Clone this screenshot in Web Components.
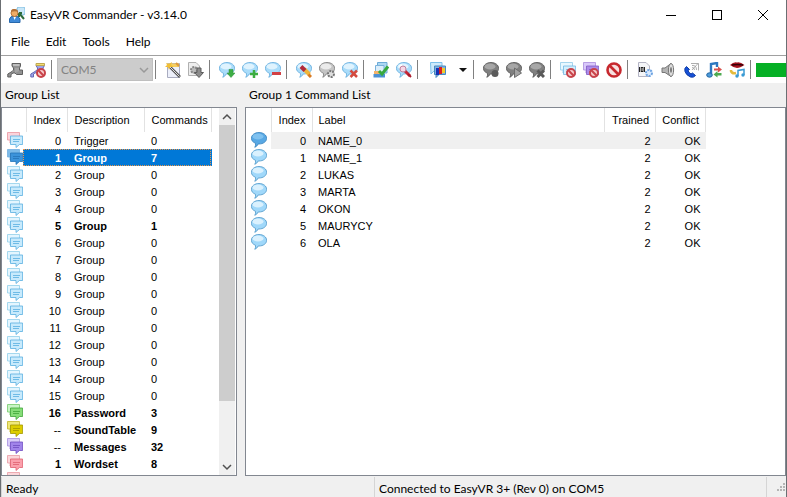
<!DOCTYPE html>
<html lang="en">
<head>
<meta charset="utf-8">
<title>EasyVR Commander</title>
<style>
html,body{margin:0;height:100%}
body{font:12px/16px Lato,"Open Sans",sans-serif;color:#000;background:#f0f0f0;overflow:hidden}
</style>
</head>
<body>
<app-window></app-window>
<script>
const bubble=(a,b,s)=>`<path d="M8 .5C12.300.5 15.600 3 15.600 6.300S12.300 12 8 12L7.200 12Q6 14.500 3.800 15.300Q4.900 13.300 4.500 11.300C2 10.300.4 8.600.4 6.300.4 3 3.700.5 8 .5Z" fill="${b}" stroke="${s}" stroke-width=".8"/><ellipse cx="7" cy="4.500" rx="5.500" ry="3" fill="${a}" opacity=".75"/>`;
const blue=bubble('#f2fbff','#a9dcfa','#5fa9dc');
const grey=bubble('#f8f8f8','#c4c4c4','#777');
const dark=bubble('#b4b4b4','#808080','#505050');
const chat=(back,backS,front,frontS)=>`<path d="M.5.5H12.500V8H5L3 11V8H.5Z" fill="${back}" stroke="${backS}" stroke-width=".8"/><path d="M3.500 4H15.600V12.500H12.500L9 15.500V12.500H3.500Z" fill="${front}" stroke="${frontS}" stroke-width=".8"/><path d="M6 7.500H13M6 9.500H12" stroke="${frontS}" stroke-width=".8" fill="none"/>`;
const ban='<circle cx="11" cy="11" r="4" fill="#f6cccc" stroke="#c9434a" stroke-width="2"/><path d="M8.300 8.300L13.700 13.700" stroke="#c9434a" stroke-width="2"/>';
const ICONS={
 app:'<rect x="8" y="0" width="8" height="8" rx="2" fill="#c9e7f8" stroke="#7dbce0"/><path d="M10 6L15 12M10 6V10M10 6H13" stroke="#2d6b3c" stroke-width="2" fill="none"/><path d="M.5 15.500V12Q1 9 5.500 9T11 12V15.500Z" fill="#3f8ad8" stroke="#2868ac"/><circle cx="5.500" cy="6" r="3.500" fill="#f0ac66" stroke="#b9763b"/><path d="M2 5Q2 1.500 5.500 2T9 5Q6 3.500 2 5Z" fill="#b07038"/><path d="M4.500 10L5.500 13 7 10Z" fill="#fff"/>',
 plug:'<path d="M5 1.500H13.500V4L12.500 6V8H15.500V12.500H9.500L8 11H6L4 12.500V15H.8V12L5 9.500 6.500 8V6L5 4Z" fill="#929292" stroke="#606060"/><path d="M6 3H12.500" stroke="#ccc" stroke-width="1.500"/><path d="M8 6V11L12 9V6Z" fill="#a4a4a4"/>',
 unplug:'<path d="M6 3.500H14.500L13 6V10H9L5 11 3.500 12V15H.8V12L5 9.500 7.500 7.500V6Z" fill="#9da5ea" stroke="#6468b5"/><path d="M6 1.500H14.500V3.500H6Z" fill="#f2dc74" stroke="#c0a850"/>'+ban,
 wizard:'<path d="M2.500 1.500H14.500V15.500H2.500Z" fill="#edf0fb" stroke="#a9acc0"/><path d="M3 1.500H14V5H3Z" fill="#f5cf62"/><path d="M3 3L15 15" stroke="#555" stroke-width="2.600"/><path d="M3 3L14.500 14.500" stroke="#ddd"/><path d="M1 1L4 2 7 0 6 3 9 5 5 5 4 8 3 5 0 5 2 3Z" fill="#f2bf36"/><path d="M11 1L14 4" stroke="#df9a3c" stroke-width="2"/>',
 download:'<path d="M.5.500H8L11.500 4V13.500H.5Z" fill="#eee" stroke="#b0b0b0"/><circle cx="6" cy="8" r="3" fill="#bbb" stroke="#888" stroke-width="2" stroke-dasharray="2 1"/><path d="M9 6H13V10.500H15.500L11 15.500 6.500 10.500H9Z" fill="#8c8c8c" stroke="#5c5c5c"/>',
 down:blue+'<path d="M10 7.500H14V11H16L12 15.500 8 11H10Z" fill="#3dae45" stroke="#2c8c38" stroke-width=".5"/>',
 add:blue+'<path d="M12 8V16M8 12H16" stroke="#3cad40" stroke-width="2.500"/>',
 remove:blue+'<path d="M7 11.500H16" stroke="#d24045" stroke-width="3"/>',
 edit:blue+'<path d="M8 7L13.500 12.500" stroke="#efb53b" stroke-width="4"/><path d="M5 4.500L9 8.500" stroke="#b02a3c" stroke-width="4"/><path d="M12.500 12.500L15 15" stroke="#d97b22" stroke-width="3"/>',
 config:grey+'<circle cx="12" cy="12" r="3" fill="#ddd" stroke="#777" stroke-width="2" stroke-dasharray="2 1"/>',
 erase:blue+'<path d="M8.500 8.500L15 15M15 8.500L8.500 15" stroke="#d34a3f" stroke-width="2.500"/>',
 train:'<path d="M4.500.5H14V11H4.500Z" fill="#acd7f3" stroke="#6caad7"/><path d="M2.500 3.500H11V14H2.500Z" fill="#dceefa" stroke="#7ab3dc"/><path d="M1 9H8L6 14H1Z" fill="#f4b36a"/><path d="M.5 12H12V15.500H.5Z" fill="#4b91d4"/><path d="M6 9L9 12 15 4.500" fill="none" stroke="#37a93e" stroke-width="3"/>',
 test:blue+'<path d="M8 8L14 14" stroke="#c52636" stroke-width="3"/><path d="M4 3L8 8" stroke="#fff" stroke-width="3"/><circle cx="7" cy="7" r="3" fill="#f5d7e6" stroke="#c0809c"/><path d="M12 12L15 15" stroke="#a81b2b" stroke-width="2"/>',
 table:'<path d="M.5.500H12V9H4L1 12Z" fill="#cdeafb" stroke="#7cc0ea"/><path d="M4.500 4H15.500V12.500H9L6 15.500V12.500H4.500Z" fill="#7db2e2" stroke="#4a88bd"/><path d="M6 6H9V13H6Z" fill="#1734b6"/><path d="M9 5H12V12H9Z" fill="#d61f26"/><path d="M12 6H15V11H12Z" fill="#f3cb2b"/>',
 record:dark+'<circle cx="12" cy="11.500" r="3.500" fill="#5b5b5b"/>',
 play:dark+'<path d="M8.500 6L15.500 11 8.500 15.500Z" fill="#a4a4a4" stroke="#6c6c6c"/>',
 stop:dark+'<path d="M8.500 8.500L15 15M15 8.500L8.500 15" stroke="#5a5a5a" stroke-width="3"/>',
 chatban:chat('#e9f8ff','#92cbe9','#d4effc','#72b7e3')+ban,
 purpleban:chat('#d9c9fa','#aa8bdc','#ad8be8','#7f5bc4')+ban,
 ban:'<circle cx="8" cy="8" r="6.500" fill="#f8e0e0" stroke="#c7282e" stroke-width="2.600"/><path d="M3.500 3.500L12.500 12.500" stroke="#c7282e" stroke-width="2.600"/>',
 binary:'<path d="M1.500.500H9L12.500 4V14.500H1.500Z" fill="#f4f5f8" stroke="#b4b4c4"/><path d="M2.500 5V10M7.500 5V10" stroke="#222" fill="none"/><rect x="4.200" y="5.500" width="1.800" height="4" fill="none" stroke="#222"/><circle cx="12" cy="11" r="3" fill="#d8eaff" stroke="#6fa4e2" stroke-width="2" stroke-dasharray="2 1"/>',
 speaker:'<path d="M2 6H5L11 1.500V14.500L5 10.500H2Z" fill="#b4b4b4" stroke="#777"/><ellipse cx="11" cy="8" rx="2.600" ry="6.500" fill="#ddd" stroke="#777"/><ellipse cx="11" cy="8" rx="1" ry="3" fill="#777"/>',
 phone:'<path d="M3.500 4.500Q1 6 2 9.500T7.500 15Q10.500 16 12.500 13.500L9.500 11 8 12Q5.500 10.500 5 8.500L6.500 7.500Z" fill="#1650d8" stroke="#103da4"/><path d="M8 1.500H15.500V8.500M9 3.500Q13.500 3 13.500 8M9 5.500Q11.500 5.500 11.500 8M9 8L15 1.500" fill="none" stroke="#999" stroke-width=".8"/>',
 music:'<path d="M5 12V2L11 1V5" fill="none" stroke="#2d78c0" stroke-width="2.400"/><ellipse cx="3.500" cy="13" rx="2.800" ry="2.200" fill="#4d9bdb" stroke="#2467a3"/><path d="M8 6.500H12V4.500L16 7.500 12 10.500V8.500H8Z" fill="#d8504c"/><path d="M15.500 11H11.500V9L7.500 12.500 11.500 15.500V13.500H15.500Z" fill="#4caa50"/>',
 lips:'<path d="M1 3Q5-.5 8 .5 11-.5 15.500 3 11 6 8 6T1 3Z" fill="#a81420"/><path d="M3 3Q8 2 14 3" stroke="#350007" stroke-width="1.500" fill="none"/><path d="M2 8V9Q3 12 7 11" stroke="#e5bb3c" stroke-width="2.500" fill="none"/><path d="M9 14V8.500L15 7.500V13" fill="none" stroke="#3a9bd4" stroke-width="1.500"/><circle cx="8" cy="14" r="1.700" fill="#3a9bd4"/><circle cx="14" cy="13" r="1.700" fill="#3a9bd4"/>',
 trigger:chat('#fbd3da','#e9949f','#c8eafc','#58aee0'),
 active:chat('#7dbbe9','#70aedf','#3c93da','#2474b8'),
 group:chat('#e4f6ff','#92cfea','#c8eafc','#58aee0'),
 password:chat('#c9f4c6','#74c96b','#86dd78','#3fa538'),
 sound:chat('#efe87a','#c1b526','#ddcd00','#a29500'),
 messages:chat('#d9cdf9','#a78fe0','#a184ea','#6e4cc0'),
 wordset:chat('#fbd6da','#e99aa3','#fba0ac','#e0606f'),
 current:bubble('#8cc9f3','#58a8e4','#3380bd'),
 command:bubble('#eefaff','#a0d8fa','#4a95c8'),
 caret:'<path d="M4 6H12L8 10Z" fill="#111"/>',
 chevdown:'<path d="M4 6L8 10 12 6" fill="none" stroke="currentColor" stroke-width="1.500"/>',
 chevup:'<path d="M4 10L8 6 12 10" fill="none" stroke="currentColor" stroke-width="1.500"/>',
 min:'<path d="M3 8.500H13" stroke="#000"/>',
 max:'<rect x="3.500" y="3.500" width="9" height="9" fill="none" stroke="#000"/>',
 close:'<path d="M3 3L13 13M13 3L3 13" stroke="#000"/>',
 grip:'<path d="M12 6h2v2h-2zM12 9h2v2h-2zM12 12h2v2h-2zM9 9h2v2H9zM9 12h2v2H9zM6 12h2v2H6z" fill="#b5b5b5"/>'
};
class UiIcon extends HTMLElement{
 constructor(){super();this.attachShadow({mode:'open'})}
 connectedCallback(){this.shadowRoot.innerHTML=`<style>:host{display:block;width:16px;height:16px;flex:none}svg{display:block;width:100%;height:100%}</style><svg viewBox="0 0 16 16" fill="none" aria-hidden="true">${ICONS[this.getAttribute('name')]}</svg>`}
}
customElements.define('ui-icon',UiIcon);

class TitleBar extends HTMLElement{
 constructor(){super();this.attachShadow({mode:'open'}).innerHTML=`<style>
 :host{display:flex;align-items:center;height:29px;background:#fff;padding-left:8px}
 .t{flex:1;white-space:nowrap;padding-left:5px}
 button{width:46px;height:29px;padding:0;border:0;background:none;display:grid;place-items:center}
 </style><ui-icon name="app"></ui-icon><span class="t"><slot></slot></span>
 <button aria-label="Minimize"><ui-icon name="min"></ui-icon></button><button aria-label="Maximize"><ui-icon name="max"></ui-icon></button><button aria-label="Close"><ui-icon name="close"></ui-icon></button>`}
}
customElements.define('title-bar',TitleBar);

class MenuBar extends HTMLElement{
 constructor(){super();this.attachShadow({mode:'open'}).innerHTML=`<style>
 :host{display:flex;align-items:center;height:26px;background:#fff;padding-left:2px;border-bottom:1px solid #a0a0a0}
 ::slotted(button){font:inherit;border:0;background:none;padding:0 8px;height:24px}
 </style><slot></slot>`}
}
customElements.define('menu-bar',MenuBar);

class ToolBar extends HTMLElement{
 constructor(){super();
 const b=(n,l)=>`<button aria-label="${l}" title="${l}"><ui-icon name="${n}"></ui-icon></button>`,s='<i></i>';
 this.attachShadow({mode:'open'}).innerHTML=`<style>
 :host{display:flex;align-items:center;height:27px;background:#fff;padding-left:2px;overflow:hidden}
 button{flex:none;width:23px;height:23px;padding:0;border:0;background:none;display:grid;place-items:center}
 i{flex:none;width:1px;height:19px;margin:0 5px 0 2px;background:#808080}
 .combo{flex:none;display:grid;width:96px;height:23px}
 .combo>*{grid-area:1/1}
 .combo ui-icon{justify-self:end;align-self:center;margin-right:1px;color:#999}
 select{appearance:none;font:inherit;color:#838383;opacity:1;background:#ccc;border:1px solid #bfbfbf;border-radius:0;padding:0 3px;width:100%}
 .split{width:48px;display:flex;align-items:center;padding-left:7px;gap:9px}
 .bar{flex:1;height:14px;background:#06b025}
 </style>${b('plug','Connect')}${b('unplug','Disconnect')}${s}
 <label class="combo"><select disabled aria-label="Port"><option>COM5</option></select><ui-icon name="chevdown"></ui-icon></label>${s}
 ${b('wizard','Wizard')}${b('download','Update')}${s}${b('down','Download')}${b('add','Add command')}${b('remove','Remove command')}${s}
 ${b('edit','Rename')}${b('config','Settings')}${b('erase','Erase training')}${s}${b('train','Train')}${b('test','Test')}${s}
 <button class="split" aria-label="Language"><ui-icon name="table"></ui-icon><ui-icon name="caret"></ui-icon></button>${s}
 ${b('record','Record')}${b('play','Play')}${b('stop','Erase recording')}${s}${b('chatban','Reset commands')}${b('purpleban','Reset messages')}${b('ban','Reset all')}${s}
 ${b('binary','Build')}${b('speaker','Play sound')}${b('phone','Dial tone')}${b('music','Sound table')}${b('lips','Lipsync')}${s}
 <div class="bar" role="progressbar" aria-label="Memory"></div>`}
}
customElements.define('tool-bar',ToolBar);

const tableCss=`table{border-collapse:collapse;table-layout:fixed;width:100%;font:11px/16px "Liberation Sans",Arial,sans-serif}
 th,td{padding:0 6px;text-align:left;white-space:nowrap;height:17px;box-sizing:border-box}
 td{padding-top:1px}
 th{font-weight:400;height:24px;border-right:1px solid #e2e2e2}
 .r{text-align:right}
 td:first-child{padding:0 0 0 5px;vertical-align:top}`;

class ListPanel extends HTMLElement{
 constructor(){super();this.attachShadow({mode:'open'}).innerHTML=`<style>
 :host{display:flex;flex-direction:column;min-height:0;min-width:0}
 h2{font:inherit;margin:0;padding:0 4px;height:24px;line-height:24px;flex:none;white-space:nowrap}
 .box{flex:1;min-height:0;display:flex;background:#fff;border:1px solid #828790;overflow:hidden}
 </style><h2></h2><div class="box"><slot></slot></div>`}
 connectedCallback(){this.shadowRoot.querySelector('h2').textContent=this.getAttribute('heading')}
}
customElements.define('list-panel',ListPanel);

class GroupTable extends HTMLElement{
 constructor(){super();
 const rows=[['trigger',0,'Trigger',0]];
 for(let i=1;i<16;i++)rows.push([i===1?'active':'group',i,'Group',i===1?7:i===5?1:0]);
 rows.push(['password',16,'Password',3],['sound','--','SoundTable',9],['messages','--','Messages',32],['wordset',1,'Wordset',8],['wordset','','','']);
 this.attachShadow({mode:'open'}).innerHTML=`<style>:host{display:block;flex:1;padding-right:7px;min-height:0;overflow:hidden}${tableCss}
 td:nth-child(n+3),th:nth-child(n+3){padding-left:7px;padding-right:0}
 .b{font-weight:700}
 .n{font-weight:400}
 .sel{color:#fff}.sel td{background:#0078d7}
 .sel td:first-child{position:relative;background:linear-gradient(to right,#fff 21px,#0078d7 21px)}
 .sel td:first-child::after{content:"";position:absolute;top:0;bottom:0;left:21px;width:188px;box-sizing:border-box;border:1px dotted #e8964a}
 </style><table><colgroup><col style="width:24px"><col style="width:41px"><col style="width:77px"><col></colgroup>
 <thead><tr><th></th><th class="r">Index</th><th>Description</th><th>Commands</th></tr></thead><tbody>${rows.map(r=>`<tr class="${r[3]?'b':''} ${r[0]==='active'?'sel':''}"><td><ui-icon name="${r[0]}"></ui-icon></td><td class="r${r[1]==='--'?' n':''}">${r[1]}</td><td>${r[2]}</td><td>${r[3]}</td></tr>`).join('')}</tbody></table>`}
}
customElements.define('group-table',GroupTable);

class CommandTable extends HTMLElement{
 constructor(){super();
 const rows=['NAME_0','NAME_1','LUKAS','MARTA','OKON','MAURYCY','OLA'];
 this.attachShadow({mode:'open'}).innerHTML=`<style>:host{display:block;flex:1;padding-right:79px;min-height:0;overflow:hidden}${tableCss}
 tbody tr:first-child td:not(:first-child){background:#f0f0f0}
 td:nth-child(n+4){padding-right:5px}
 </style><table><colgroup><col style="width:25px"><col style="width:41px"><col><col style="width:51px"><col style="width:50px"></colgroup>
 <thead><tr><th></th><th class="r">Index</th><th>Label</th><th class="r">Trained</th><th class="r">Conflict</th></tr></thead><tbody>${rows.map((n,i)=>`<tr><td><ui-icon name="${i?'command':'current'}"></ui-icon></td><td class="r">${i}</td><td>${n}</td><td class="r">2</td><td class="r">OK</td></tr>`).join('')}</tbody></table>`}
}
customElements.define('command-table',CommandTable);

class ScrollBar extends HTMLElement{
 constructor(){super();this.attachShadow({mode:'open'}).innerHTML=`<style>
 :host{display:flex;flex-direction:column;width:16px;flex:none;background:#f0f0f0;margin-right:1px;color:#505050}
 button{border:0;padding:0;background:none;height:17px;display:grid;place-items:center;color:inherit}
 .track{flex:1}.thumb{height:83%;background:#cdcdcd}
 </style><button aria-label="Scroll up"><ui-icon name="chevup"></ui-icon></button><div class="track"><div class="thumb"></div></div><button aria-label="Scroll down"><ui-icon name="chevdown"></ui-icon></button>`}
}
customElements.define('scroll-bar',ScrollBar);

class StatusBar extends HTMLElement{
 constructor(){super();this.attachShadow({mode:'open'}).innerHTML=`<style>
 :host{display:grid;grid-template-columns:minmax(0,373fr) minmax(0,392fr) 20px;height:21px;background:#f0f0f0;white-space:nowrap}
 div{padding-left:4px;border-left:1px solid #d5d5d5;margin-top:1px;line-height:23px}
 div:first-child{border:0;padding-left:2px}
 </style><div><slot name="state"></slot></div><div><slot name="link"></slot></div><div><ui-icon name="grip"></ui-icon></div>`}
}
customElements.define('status-bar',StatusBar);

class AppWindow extends HTMLElement{
 constructor(){super();this.attachShadow({mode:'open'}).innerHTML=`<style>
 :host{display:flex;flex-direction:column;height:100vh;box-sizing:border-box;border:solid #6b6f73;border-width:0 1px}
 main{flex:1;min-height:0;display:flex;gap:8px}
 .left{width:236px;flex:none}.right{flex:1}
 </style><title-bar>EasyVR Commander - v3.14.0</title-bar>
 <menu-bar><button>File</button><button>Edit</button><button>Tools</button><button>Help</button></menu-bar>
 <tool-bar></tool-bar>
 <main><list-panel class="left" heading="Group List"><group-table></group-table><scroll-bar></scroll-bar></list-panel>
 <list-panel class="right" heading="Group 1 Command List"><command-table></command-table></list-panel></main>
 <status-bar><span slot="state">Ready</span><span slot="link">Connected to EasyVR 3+ (Rev 0) on COM5</span></status-bar>`}
}
customElements.define('app-window',AppWindow);
</script>
</body>
</html>
